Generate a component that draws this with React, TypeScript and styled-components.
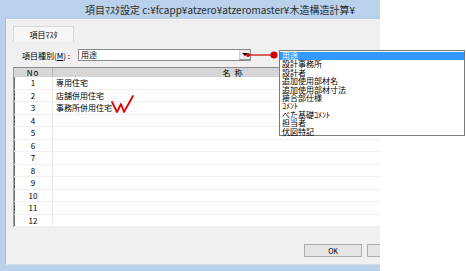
import React from 'react';
import styled, { createGlobalStyle } from 'styled-components';

const GlobalStyle = createGlobalStyle`
  html, body {
    margin: 0;
    padding: 0;
    background: #ffffff;
  }
  body {
    font-family: "Noto Sans CJK JP", "Noto Sans", sans-serif;
    color: #000000;
  }
`;

// Page holds the cropped dialog plus the annotation overlay
const Page = styled.div`
  position: relative;
  width: 466px;
  height: 271px;
  overflow: hidden;
`;

// The dialog is wider than the shot, so it is cut off at 380px
const Crop = styled.div`
  width: 380px;
  height: 271px;
  overflow: hidden;
`;

const Window = styled.div`
  width: 440px;
  height: 271px;
  box-sizing: border-box;
  padding: 0 5px 6px 5px;
  background: #b9d1ea;
  display: flex;
  flex-direction: column;
`;

const TitleBar = styled.div`
  height: 19px;
  display: flex;
  align-items: center;
  justify-content: center;
  font-size: 10px;
  color: #2b2b2b;
  white-space: nowrap;
`;

const Client = styled.div`
  flex: 1;
  box-sizing: border-box;
  background: #f0f0f0;
  border-left: 1px solid #a8bfd8;
  border-bottom: 1px solid #d2e0ee;
  padding: 7px 0 0 7px;
  display: flex;
  flex-direction: column;
`;

const TabStrip = styled.div`
  display: flex;
  height: 16px;
`;

const Tab = styled.div`
  width: 61px;
  box-sizing: border-box;
  border: 1px solid #d7d7d7;
  border-bottom: none;
  background: #f7f7f7;
  font-size: 8px;
  display: flex;
  align-items: center;
  justify-content: center;
`;

const FieldRow = styled.div`
  margin-top: 7px;
  height: 12px;
  display: flex;
  align-items: center;
`;

const Label = styled.div`
  width: 65px;
  padding-left: 9px;
  box-sizing: border-box;
  font-size: 8px;
  white-space: nowrap;

  u {
    text-decoration: underline;
  }
`;

const Combo = styled.div`
  width: 173px;
  height: 12px;
  box-sizing: border-box;
  border: 1px solid #8a8a8a;
  background: #ffffff;
  display: flex;
  align-items: stretch;
`;

const ComboText = styled.div`
  flex: 1;
  font-size: 8px;
  line-height: 10px;
  padding-left: 2px;
`;

const ComboButton = styled.div`
  width: 10px;
  background: #ececec;
  border-left: 1px solid #d0d0d0;
  border-bottom: 1px solid #9a9a9a;
  display: flex;
  align-items: center;
  justify-content: center;

  &::after {
    content: '';
    border-left: 3px solid transparent;
    border-right: 3px solid transparent;
    border-top: 3px solid #000000;
  }
`;

const Table = styled.div`
  margin-top: 6px;
  width: 401px;
  height: 160px;
  box-sizing: border-box;
  border-left: 1px solid #a0a0a0;
  box-shadow: inset 1px 0 0 #6a6a6a;
  background: #ffffff;
  display: flex;
  flex-direction: column;
`;

const HeaderRow = styled.div`
  height: 10px;
  display: flex;
  background: #d6d6d6;
  border-top: 1px solid #8c8c8c;
  box-sizing: border-box;
  font-size: 8px;
`;

const HeaderCell = styled.div<{ $width?: number }>`
  ${(p) => (p.$width ? `width: ${p.$width}px;` : 'flex: 1;')}
  display: flex;
  align-items: center;
  justify-content: center;
  line-height: 9px;
  border-right: 1px solid #b5b5b5;
  letter-spacing: 1px;
`;

const Row = styled.div`
  height: 12.5px;
  display: flex;
  box-sizing: border-box;
  border-bottom: 1px solid #efefef;
  font-size: 8px;
`;

const NoCell = styled.div`
  width: 38px;
  display: flex;
  align-items: center;
  justify-content: center;
  border-right: 1px solid #ebebeb;
`;

const NameCell = styled.div`
  flex: 1;
  display: flex;
  align-items: center;
  padding-left: 3px;
`;

const Footer = styled.div`
  margin-top: 17px;
  height: 13px;
  display: flex;
  justify-content: flex-end;
  gap: 5px;
  padding-right: 10px;
`;

const Button = styled.div`
  width: 58px;
  box-sizing: border-box;
  background: #e5e5e5;
  border: 1px solid #acacac;
  font-size: 7px;
  display: flex;
  align-items: center;
  justify-content: center;
`;

// Dropdown contents shown beside the dialog as an annotation
const ListPopup = styled.div`
  position: absolute;
  left: 279px;
  top: 50px;
  width: 186px;
  height: 86px;
  box-sizing: border-box;
  border: 1px solid #7a7a7a;
  background: #ffffff;
  padding-top: 1px;
`;

const ListItem = styled.div<{ $selected?: boolean }>`
  height: 8.4px;
  line-height: 8.4px;
  font-size: 8px;
  padding-left: 2px;
  white-space: nowrap;
  background: ${(p) => (p.$selected ? '#3399ff' : 'transparent')};
  color: ${(p) => (p.$selected ? '#ffffff' : '#000000')};
`;

const Overlay = styled.svg`
  position: absolute;
  left: 0;
  top: 0;
  pointer-events: none;
`;

const rows = ['専用住宅', '店舗併用住宅', '事務所併用住宅', '', '', '', '', '', '', '', '', ''];

const listItems = [
  '用途',
  '設計事務所',
  '設計者',
  '追加使用部材名',
  '追加使用部材寸法',
  '接合部仕様',
  'ｺﾒﾝﾄ',
  'べた基礎ｺﾒﾝﾄ',
  '担当者',
  '伏図特記'
];

const App = (): JSX.Element => {
  return (
    <Page>
      <GlobalStyle />
      <Crop>
        <Window>
          <TitleBar>項目ﾏｽﾀ設定 c:¥fcapp¥atzero¥atzeromaster¥木造構造計算¥</TitleBar>
          <Client>
            <TabStrip>
              <Tab>項目ﾏｽﾀ</Tab>
            </TabStrip>

            <FieldRow>
              <Label>
                項目種別(<u>M</u>) :
              </Label>
              <Combo>
                <ComboText>用途</ComboText>
                <ComboButton />
              </Combo>
            </FieldRow>

            <Table>
              <HeaderRow>
                <HeaderCell $width={38}>No</HeaderCell>
                <HeaderCell>名 称</HeaderCell>
              </HeaderRow>
              {rows.map((name, i) => (
                <Row key={i}>
                  <NoCell>{i + 1}</NoCell>
                  <NameCell>{name}</NameCell>
                </Row>
              ))}
            </Table>

            {/* Second button is cut off by the crop, its label is not visible */}
            <Footer>
              <Button>OK</Button>
              <Button />
            </Footer>
          </Client>
        </Window>
      </Crop>

      <ListPopup>
        {listItems.map((item, i) => (
          <ListItem key={item} $selected={i === 0}>
            {item}
          </ListItem>
        ))}
      </ListPopup>

      {/* Red markers drawn over the screenshot */}
      <Overlay width={466} height={271} viewBox="0 0 466 271">
        <line x1={248} y1={55} x2={274} y2={55} stroke="#cc0000" strokeWidth={1.2} />
        <circle cx={248} cy={55} r={2} fill="#cc0000" />
        <circle cx={274} cy={55} r={3.6} fill="#cc0000" />
        <polyline
          points="112,102 117,112 121,104 124,112 133,96"
          fill="none"
          stroke="#dd0000"
          strokeWidth={1.8}
          strokeLinejoin="round"
          strokeLinecap="round"
        />
      </Overlay>
    </Page>
  );
};

export default App;
